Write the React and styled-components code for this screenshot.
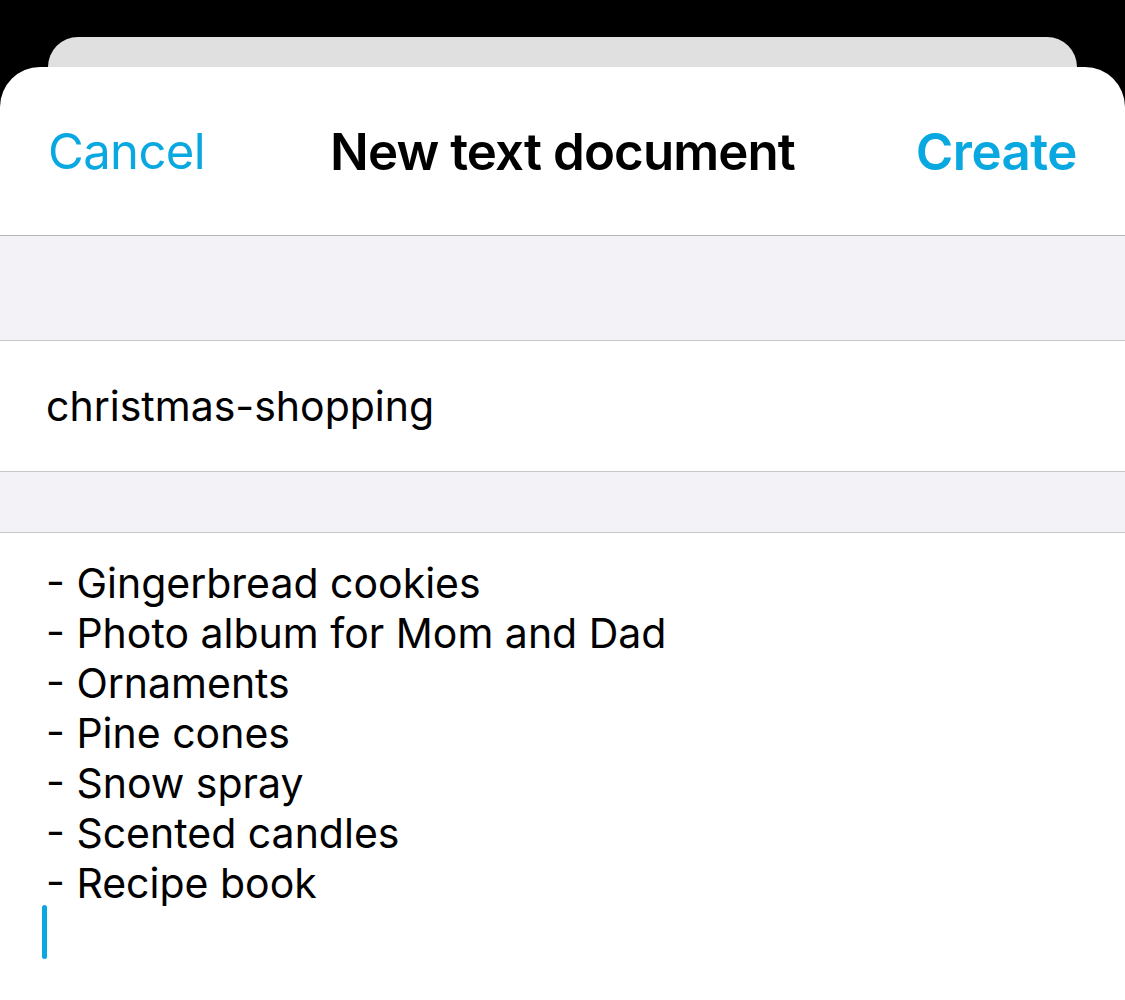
import styled, { createGlobalStyle } from "styled-components";

const GlobalStyle = createGlobalStyle`
  body {
    margin: 0;
    background: #000;
    font-family: "Inter", "Liberation Sans", sans-serif;
    -webkit-font-smoothing: antialiased;
  }
`;

const Screen = styled.div`
  height: 1000px;
  overflow: hidden;
  padding-top: 37px;
  box-sizing: border-box;
  display: flex;
  flex-direction: column;
`;

const BackCard = styled.div`
  height: 30px;
  margin: 0 48px;
  background: #e0e0e0;
  border-radius: 30px 30px 0 0;
`;

const Sheet = styled.div`
  flex: 1;
  background: #fff;
  border-radius: 40px 40px 0 0;
  display: flex;
  flex-direction: column;
`;

const NavBar = styled.div`
  height: 168px;
  display: grid;
  grid-template-columns: 1fr auto 1fr;
  align-items: center;
  padding: 0 48px;
  border-bottom: 1px solid #b4b4b8;
`;

const NavButton = styled.button`
  border: none;
  background: none;
  padding: 0;
  font-family: inherit;
  font-size: ${(p) => (p.$bold ? 51 : 49)}px;
  font-weight: ${(p) => (p.$bold ? 600 : 400)};
  color: #0aa8e0;
  justify-self: ${(p) => (p.$end ? "end" : "start")};
  letter-spacing: ${(p) => (p.$bold ? "-0.5px" : "-0.6px")};
`;

const Title = styled.h1`
  margin: 0;
  font-size: 51px;
  font-weight: 600;
  color: #000;
  letter-spacing: -0.9px;
`;

const Spacer = styled.div`
  height: ${(p) => p.$h}px;
  background: #f2f2f7;
  border-bottom: 1px solid #c8c7cc;
`;

const NameRow = styled.div`
  height: 130px;
  display: flex;
  align-items: center;
  padding-left: 46px;
  font-size: 41px;
  color: #000;
  border-bottom: 1px solid #c8c7cc;
`;

const Body = styled.div`
  padding: 25px 46px 0;
  font-size: 41px;
  line-height: 50px;
  color: #000;
`;

const Line = styled.div`
  white-space: pre;
`;

const Caret = styled.div`
  width: 5px;
  height: 54px;
  margin: -3px 0 0 -4px;
  border-radius: 3px;
  background: #0aa8e0;
`;

const items = [
  "Gingerbread cookies",
  "Photo album for Mom and Dad",
  "Ornaments",
  "Pine cones",
  "Snow spray",
  "Scented candles",
  "Recipe book",
];

export default function App() {
  return (
    <>
      <GlobalStyle />
      <Screen>
        <BackCard />
        <Sheet>
          <NavBar>
            <NavButton type="button">Cancel</NavButton>
            <Title>New text document</Title>
            <NavButton type="button" $bold $end>
              Create
            </NavButton>
          </NavBar>
          <Spacer $h={104} />
          <NameRow>christmas-shopping</NameRow>
          <Spacer $h={60} />
          <Body>
            {items.map((item) => (
              <Line key={item}>- {item}</Line>
            ))}
            <Caret />
          </Body>
        </Sheet>
      </Screen>
    </>
  );
}
